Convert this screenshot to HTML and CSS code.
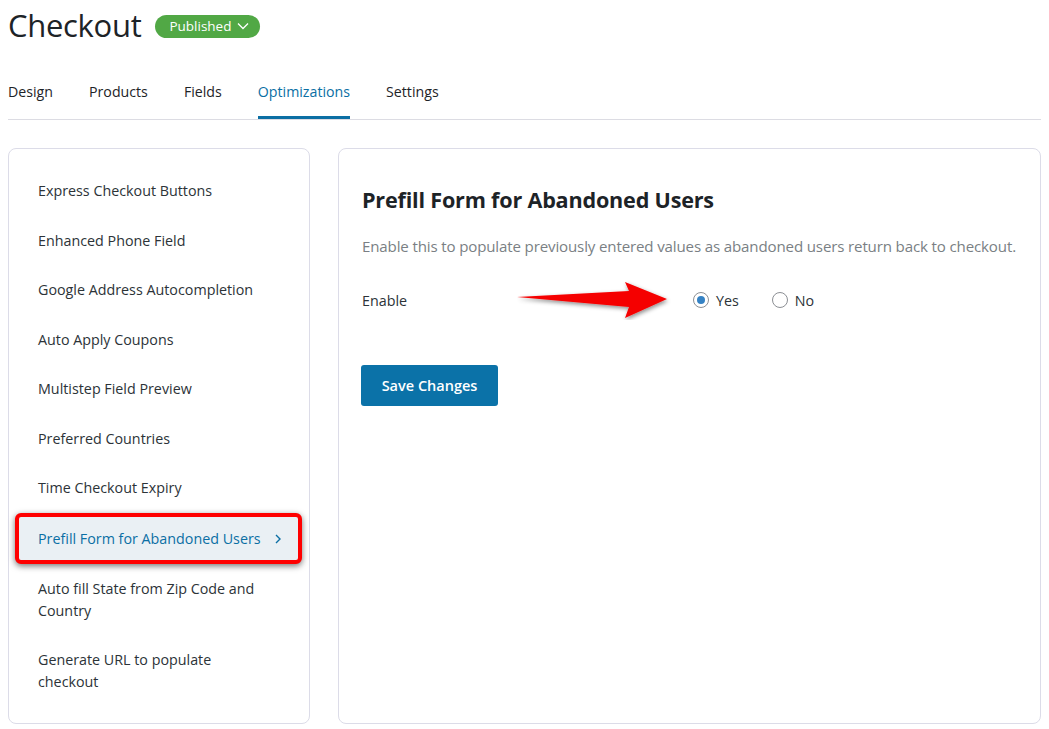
FILE: index.html
```html
<html>

<head>
	<meta charset="utf-8">
	<title>Checkout</title>
	<link rel="stylesheet" href="styles.css">
</head>

<body>
	<div class="page">
		<div class="head">
			<h1>Checkout</h1>
			<span class="badge">Published
				<svg width="12" height="8" viewBox="0 0 12 8"><path d="M1 1.5 6 6.5 11 1.5" fill="none" stroke="#fff" stroke-width="1.3"/></svg>
			</span>
		</div>
		<nav class="tabs">
			<a>Design</a>
			<a>Products</a>
			<a>Fields</a>
			<a class="active">Optimizations</a>
			<a>Settings</a>
		</nav>
		<div class="columns">
			<div class="card side">
				<a class="item">Express Checkout Buttons</a>
				<a class="item">Enhanced Phone Field</a>
				<a class="item">Google Address Autocompletion</a>
				<a class="item">Auto Apply Coupons</a>
				<a class="item">Multistep Field Preview</a>
				<a class="item">Preferred Countries</a>
				<a class="item">Time Checkout Expiry</a>
				<a class="item current">Prefill Form for Abandoned Users
					<svg width="8" height="12" viewBox="0 0 8 12"><path d="M2 2 6 6 2 10" fill="none" stroke="#0b6fa4" stroke-width="1.4"/></svg>
				</a>
				<a class="item">Auto fill State from Zip Code and Country</a>
				<a class="item">Generate URL to populate checkout</a>
			</div>
			<div class="card main">
				<h2>Prefill Form for Abandoned Users</h2>
				<p class="desc">Enable this to populate previously entered values as abandoned users return back to checkout.</p>
				<div class="row">
					<span class="label">Enable</span>
					<svg class="arrow" width="156" height="40" viewBox="0 0 156 40">
						<defs>
							<filter id="sh" x="-10%" y="-30%" width="130%" height="170%">
								<feDropShadow dx="1" dy="2" stdDeviation="2" flood-color="#000" flood-opacity="0.45"/>
							</filter>
						</defs>
						<path d="M0 17 L112 11 L108 2 L150 19 L108 38 L112 27 Z" fill="#f50000" filter="url(#sh)"/>
					</svg>
					<label class="radio"><span class="dot on"></span>Yes</label>
					<label class="radio"><span class="dot"></span>No</label>
				</div>
				<button class="save">Save Changes</button>
			</div>
		</div>
	</div>
</body>

</html>
```
FILE: styles.css
```css
body {
	margin: 0;
	background: #fff;
	font-family: "Open Sans", "Noto Sans", sans-serif;
	color: #2c3338;
}

.page {
	padding: 0 8px;
}

.head {
	display: flex;
	align-items: center;
	gap: 14px;
	height: 50px;
}

h1 {
	margin: 0;
	font-size: 31px;
	font-weight: 500;
	color: #1d2327;
	letter-spacing: -0.3px;
}

.badge {
	background: #51a845;
	color: #fff;
	font-size: 13.5px;
	border-radius: 12px;
	padding: 2px 11px 3px 14px;
	display: inline-flex;
	align-items: center;
	gap: 6px;
	margin-top: 2px;
}

.tabs {
	display: flex;
	gap: 36px;
	border-bottom: 1px solid #dcdce3;
	margin-top: 18px;
	height: 51px;
}

.tabs a {
	font-size: 14.2px;
	font-weight: 500;
	color: #1d2327;
	padding-top: 14px;
	box-sizing: border-box;
	height: 51px;
}

.tabs a.active {
	color: #0b6fa4;
	border-bottom: 3px solid #0b6fa4;
}

.columns {
	display: flex;
	gap: 28px;
	margin-top: 28px;
}

.card {
	border: 1px solid #dcdce8;
	border-radius: 8px;
	box-sizing: border-box;
	height: 576px;
}

.side {
	width: 302px;
	padding: 17px 9px;
	display: flex;
	flex-direction: column;
}

.item {
	font-size: 14.3px;
	color: #2c3338;
	padding: 14px 36px 13.5px 20px;
	line-height: 22px;
	display: block;
}

.item.current {
	color: #0b6fa4;
	background: #eaf0f4;
	border: 4px solid #f00;
	border-radius: 6px;
	box-shadow: 0 2px 6px rgba(0, 0, 0, 0.55);
	padding: 11px 14px 10px 19px;
	margin: 0 -2px 0 -3px;
	display: flex;
	align-items: center;
	gap: 13px;
}

.main {
	flex: 1;
	padding: 36px 23px;
}

h2 {
	margin: 0;
	font-size: 21.6px;
	font-weight: 700;
	color: #1d2327;
	letter-spacing: -0.2px;
}

.desc {
	margin: 22px 0 0;
	font-size: 15.1px;
	color: #7a7f84;
	letter-spacing: -0.15px;
	white-space: nowrap;
}

.row {
	display: flex;
	align-items: center;
	margin-top: 24px;
	height: 40px;
	font-size: 14.3px;
}

.label {
	width: 155px;
}

.arrow {
	margin-right: 20px;
}

.radio {
	display: flex;
	align-items: center;
	gap: 7px;
	margin-right: 33px;
	color: #2c3338;
}

.dot {
	width: 16px;
	height: 16px;
	border: 1px solid #8c8f94;
	border-radius: 50%;
	box-sizing: border-box;
	display: inline-block;
	position: relative;
}

.dot.on::after {
	content: "";
	position: absolute;
	left: 3px;
	top: 3px;
	width: 8px;
	height: 8px;
	border-radius: 50%;
	background: #3582c4;
}

.save {
	margin-top: 45px;
	margin-left: -1px;
	background: #0b72a8;
	color: #fff;
	border: none;
	border-radius: 3px;
	font-family: inherit;
	font-size: 14.5px;
	font-weight: 600;
	width: 137px;
	height: 41px;
}
```
